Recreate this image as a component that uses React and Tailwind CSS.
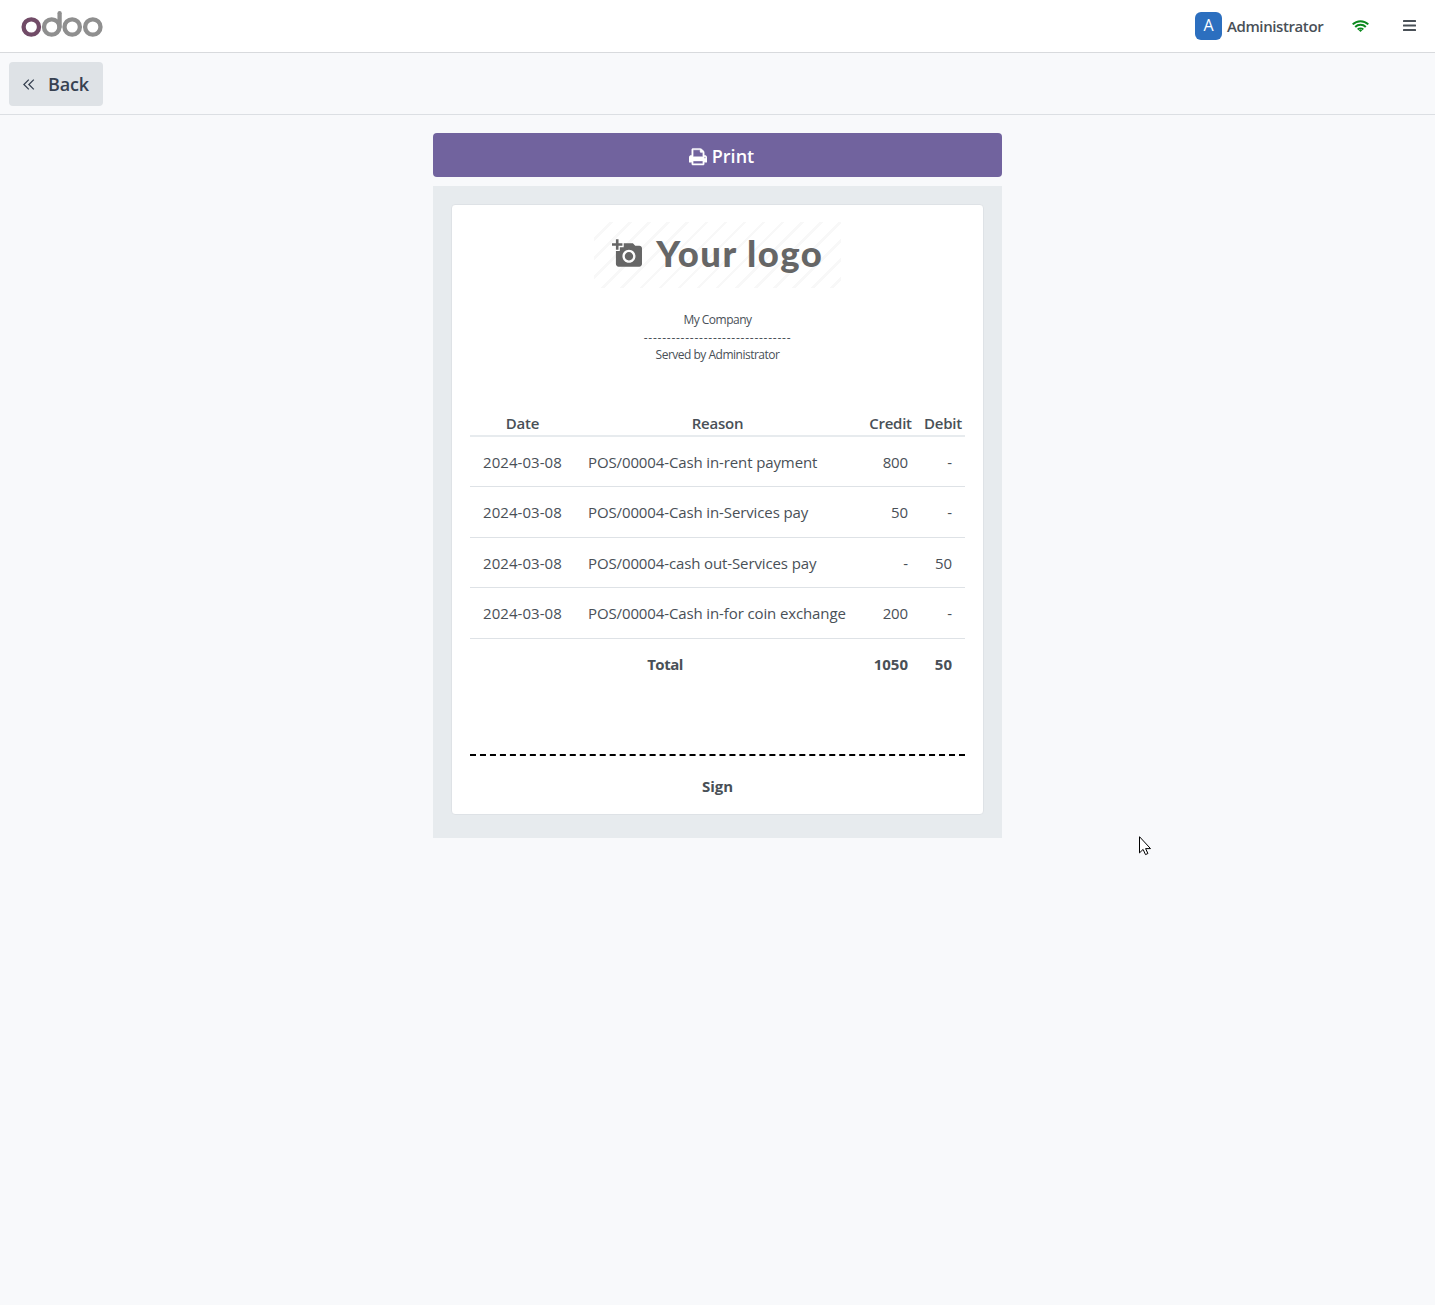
const entries = [
  { date: "2024-03-08", reason: "POS/00004-Cash in-rent payment", credit: "800", debit: "-" },
  { date: "2024-03-08", reason: "POS/00004-Cash in-Services pay", credit: "50", debit: "-" },
  { date: "2024-03-08", reason: "POS/00004-cash out-Services pay", credit: "-", debit: "50" },
  { date: "2024-03-08", reason: "POS/00004-Cash in-for coin exchange", credit: "200", debit: "-" },
];

function OdooLogo() {
  return (
    <svg width="84" height="30" viewBox="20 9 84 30" fill="none" strokeWidth="4.3" aria-label="odoo">
      <circle cx="31.3" cy="27" r="7.7" stroke="#714b67" />
      <g stroke="#8f8f8f">
        <circle cx="51.7" cy="27" r="7.7" />
        <path d="M59.6 13.2V27" strokeLinecap="round" />
        <circle cx="72.2" cy="27" r="7.7" />
        <circle cx="92.8" cy="27" r="7.7" />
      </g>
    </svg>
  );
}

function PrintIcon() {
  return (
    <svg className="mt-0.5" width="18" height="19.500" viewBox="0 0 1664 1792" fill="currentColor" stroke="currentColor" strokeWidth="40">
      <path d="M384 1536h896v-256H384v256zm0-640h896V512h-160q-40 0-68-28t-28-68V256H384v640zm1152 64q0-26-19-45t-45-19-45 19-19 45 19 45 45 19 45-19 19-45zm128 0v416q0 13-9.500 22.500t-22.500 9.500h-224v160q0 40-28 68t-68 28H352q-40 0-68-28t-28-68v-160H32q-13 0-22.500-9.500T0 1376V960q0-79 56.500-135.500T192 768h64V224q0-40 28-68t68-28h672q40 0 88 20t76 48l152 152q28 28 48 76t20 88v256h64q79 0 135.500 56.500T1664 960z" />
    </svg>
  );
}

function WifiIcon() {
  return (
    <svg width="17" height="12" viewBox="0 0 17 12" fill="none" stroke="#0b8a1e" strokeWidth="2">
      <path d="M.7 4.400a11 11 0 0 1 15.600 0" />
      <path d="M3.200 7a7.500 7.500 0 0 1 10.600 0" />
      <path d="M5.700 9.500a4 4 0 0 1 5.600 0" strokeWidth="1.800" />
      <path d="M8.500 12 6.700 10.200a2.600 2.600 0 0 1 3.600 0z" fill="#0b8a1e" stroke="none" />
    </svg>
  );
}

function CameraIcon() {
  return (
    <svg className="-mt-[3px]" width="31.300" height="31.300" viewBox="0 0 24 24" fill="#666">
      <path d="M3 4V1h2v3h3v2H5v3H3V6H0V4h3zm3 6V7h3V4h7l1.830 2H21c1.100 0 2 .9 2 2v12c0 1.100-.9 2-2 2H5c-1.100 0-2-.9-2-2V10h3zm7 9c2.760 0 5-2.240 5-5s-2.240-5-5-5-5 2.240-5 5 2.240 5 5 5zm-3.200-5c0 1.770 1.430 3.200 3.200 3.200s3.200-1.430 3.200-3.200-1.430-3.200-3.200-3.200-3.200 1.430-3.200 3.200z" />
    </svg>
  );
}

function Header() {
  return (
    <header className="flex h-[53px] items-center justify-between border-b border-[#d8dadd] bg-white pr-[19px] pl-5">
      <div className="-mt-1">
        <OdooLogo />
      </div>
      <div className="flex items-center">
        <div className="flex h-7 w-[27px] items-center justify-center rounded-md bg-[#2c6fbf] pb-0.5 text-[16px] leading-none text-white">A</div>
        <span className="ml-[5px] w-[97px] whitespace-nowrap text-[15px] font-semibold tracking-[-0.4px]">Administrator</span>
        <span className="-mt-px ml-7">
          <WifiIcon />
        </span>
        <svg className="-mt-0.5 ml-[34px]" width="13" height="11" viewBox="0 0 13 11" fill="#495057">
          <rect width="13" height="2" rx=".5" />
          <rect y="4.500" width="13" height="2" rx=".5" />
          <rect y="9" width="13" height="2" rx=".5" />
        </svg>
      </div>
    </header>
  );
}

function Receipt() {
  return (
    <div className="bg-[#e7ebee] px-[18px] pt-[18px] pb-[23px]">
      <div className="h-[611px] rounded border border-[#dee2e6] bg-white px-[18px] pt-[17px] text-center">
        <div className="mx-auto flex h-[66px] w-[247px] items-center bg-[repeating-linear-gradient(135deg,#fff_0_11px,#f8f8f8_11px_13.500px)] pl-[18px]">
          <CameraIcon />
          <span className="-mt-[3px] ml-[13px] whitespace-nowrap font-['Lato',sans-serif] text-[36.500px] leading-none font-black tracking-[1.5px] text-[#666]">
            Your logo
          </span>
        </div>
        <div className="mt-[23px] text-[12px] leading-[17.500px] tracking-[-0.5px]">
          <div>My Company</div>
          <div className="tracking-[0.75px]">--------------------------------</div>
          <div>Served by Administrator</div>
        </div>
        <table className="mt-[47px] w-[495px] table-fixed border-collapse text-[15px] leading-[22px] tracking-[-0.12px]">
          <colgroup>
            <col className="w-[105px]" />
            <col className="w-[285px]" />
            <col className="w-[61px]" />
            <col className="w-[44px]" />
          </colgroup>
          <thead>
            <tr className="h-[25px] border-b-2 border-[#e7ebee] tracking-[-0.25px]">
              <th className="p-0 font-semibold">Date</th>
              <th className="p-0 font-semibold">Reason</th>
              <th className="p-0 font-semibold">Credit</th>
              <th className="p-0 font-semibold">Debit</th>
            </tr>
          </thead>
          <tbody>
            {entries.map((e) => (
              <tr key={e.reason} className="h-[50px] border-b border-[#dee2e6] first:h-[50.500px] even:h-[51px]">
                <td className="px-0 pt-px pb-0 tracking-[0.05px]">{e.date}</td>
                <td className="pt-px pr-0 pb-0 pl-[13px] text-left whitespace-nowrap">{e.reason}</td>
                <td className="pt-px pr-[13px] pb-0 pl-0 text-right">{e.credit}</td>
                <td className="pt-px pr-[13px] pb-0 pl-0 text-right">{e.debit}</td>
              </tr>
            ))}
            <tr className="h-[50px] font-bold">
              <td className="px-0 pt-px pb-0 tracking-[-0.5px]" colSpan={2}>Total</td>
              <td className="pt-px pr-[13px] pb-0 pl-0 text-right tracking-normal">1050</td>
              <td className="pt-px pr-[13px] pb-0 pl-0 text-right tracking-normal">50</td>
            </tr>
          </tbody>
        </table>
        <div className="mt-[66px] border-t-2 border-dashed border-black pt-[19px] text-[15px] leading-[22px] font-bold">Sign</div>
      </div>
    </div>
  );
}

export default function App() {
  return (
    <div className="relative h-[1305px] overflow-hidden bg-[#f8f9fb] font-['Open_Sans','Noto_Sans',sans-serif] text-[#495057]">
      <Header />
      <nav className="h-[62px] border-b border-[#dcdfe3] px-[9px] pt-[9px]">
        <button className="flex h-11 w-[94px] items-center rounded bg-[#dee2e6] pl-[14px] text-[18px] font-semibold text-[#374151]">
          <svg width="12" height="11" viewBox="0 0 12 11" fill="none" stroke="currentColor" strokeWidth="1.300">
            <path d="M5.800.6.9 5.500l4.900 4.900M10.800.6 5.900 5.500l4.900 4.900" />
          </svg>
          <span className="ml-[13px] tracking-[-0.2px]">Back</span>
        </button>
      </nav>
      <main className="mx-auto mt-[18px] w-[569px]">
        <button className="mb-[9px] flex h-11 w-full items-center justify-center gap-[5px] rounded bg-[#71639e] pt-0.5 pl-2 text-[18px] font-semibold text-white">
          <PrintIcon />
          <span>Print</span>
        </button>
        <Receipt />
      </main>
      <svg className="absolute top-[836px] left-[1139px]" width="13" height="20" viewBox="0 0 13 20" fill="#fff" stroke="#000">
        <path d="M.5.7v16.200l3.600-3.500 2.400 5.200 2.400-1.100-2.300-4.900h4.900z" />
      </svg>
    </div>
  );
}
